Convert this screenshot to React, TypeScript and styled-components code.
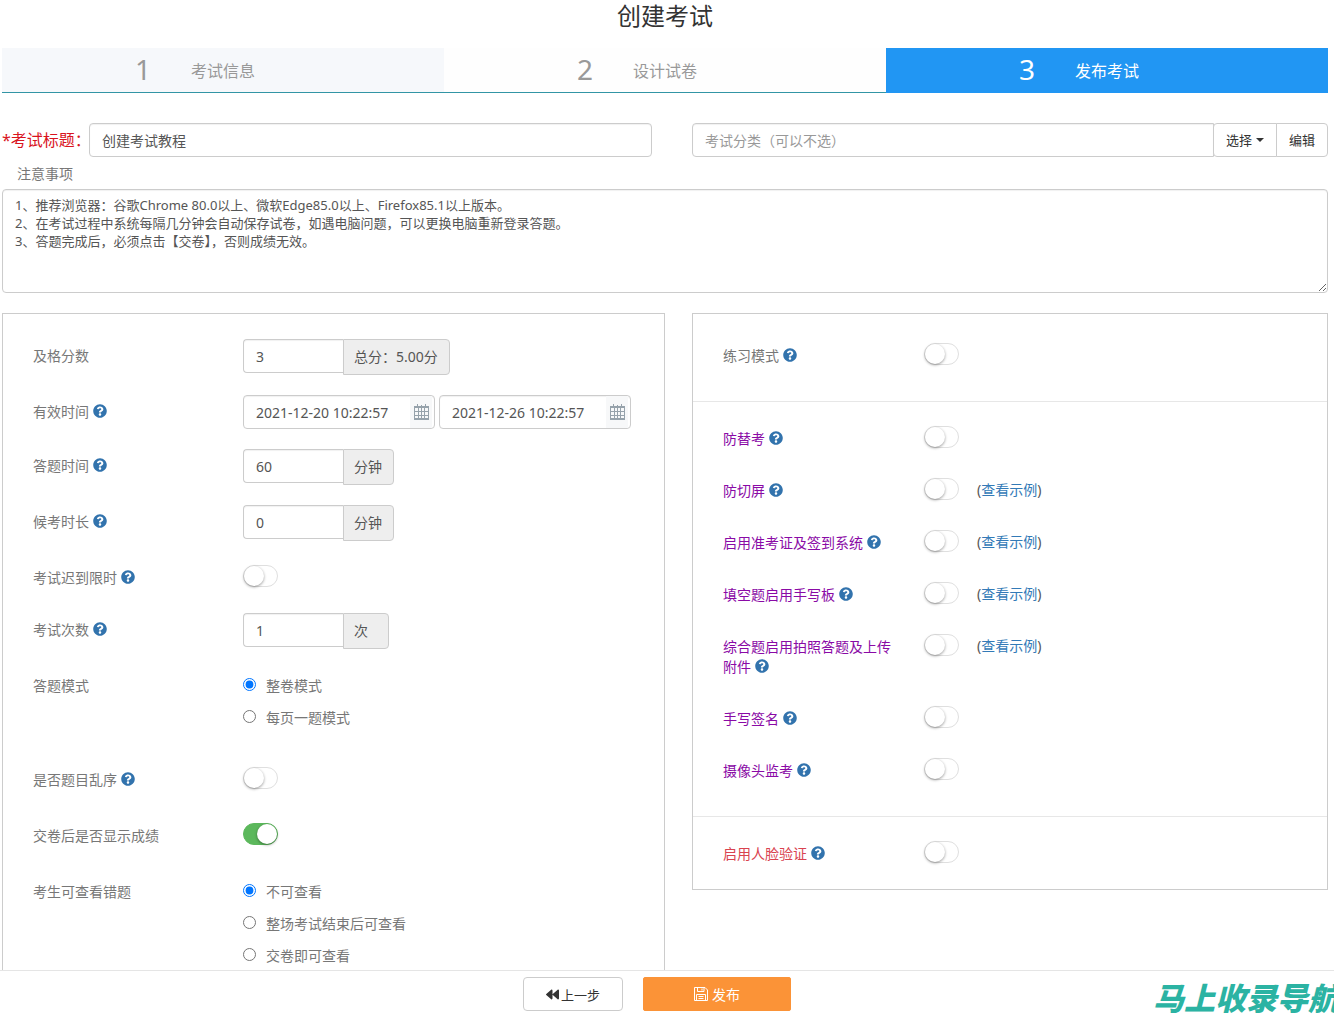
import React from "react";
import styled, { createGlobalStyle } from "styled-components";
import { FaQuestionCircle, FaBackward } from "react-icons/fa";

const GlobalStyle = createGlobalStyle`
  *, *::before, *::after { box-sizing: border-box; }
  body {
    margin: 0;
    background: #fff;
    color: #555;
    font: 14px/20px "Noto Sans", "Noto Sans CJK SC", sans-serif;
  }
  input, textarea, button { font-family: inherit; color: inherit; margin: 0; }
`;

const Page = styled.div`
  display: flex;
  flex-direction: column;
  height: 100vh;
  overflow: hidden;
`;

const Main = styled.main`
  flex: 1;
  min-height: 0;
  overflow-y: auto;
  scrollbar-width: none;
  padding: 0 6px 20px 2px;
`;

const PageTitle = styled.h1`
  margin: 0 0 16px;
  color: #333;
  font-size: 24px;
  font-weight: 400;
  line-height: 32px;
  text-align: center;
`;

const Steps = styled.ol`
  display: grid;
  grid-template-columns: repeat(3, 1fr);
  margin: 0 0 30px;
  padding: 0;
  list-style: none;
`;

type StepState = "done" | "idle" | "active";
const stepBackground = { done: "#f6f8fb", idle: "#fefefe", active: "#2196f3" };

const Step = styled.li<{ $state: StepState }>`
  display: grid;
  grid-template-columns: 1fr auto 1fr;
  align-items: center;
  height: 45px;
  border-bottom: 1px solid ${(p) => (p.$state === "active" ? "#2196f3" : "#3295a5")};
  background: ${(p) => stepBackground[p.$state]};
  color: ${(p) => (p.$state === "active" ? "#fff" : "#999")};
  font-size: 16px;
`;

const StepNumber = styled.span`
  justify-self: end;
  padding: 0 40px 2px 0;
  font-size: 28px;
  line-height: 42px;
`;

const StepLabel = styled.span`
  padding-top: 2px;
`;

const Halves = styled.div`
  display: grid;
  grid-template-columns: repeat(2, minmax(0, 1fr));
  align-items: start;
`;

const TitleField = styled.div`
  display: flex;
  align-items: center;
  padding-right: 13px;
`;

const RequiredLabel = styled.label`
  flex: 0 0 87px;
  min-width: 0;
  color: #d9141e;
  font-size: 16px;
  white-space: nowrap;
`;

const TextInput = styled.input<{ $joined?: boolean }>`
  flex: 1;
  min-width: 0;
  height: 34px;
  padding: 6px 12px;
  border: 1px solid #ccc;
  border-radius: ${(p) => (p.$joined ? "4px 0 0 4px" : "4px")};
  background: #fff;
  box-shadow: inset 0 1px 1px rgba(0, 0, 0, 0.06);
  font-size: 14px;
  &::placeholder { color: #999; opacity: 1; }
`;

const CategoryField = styled.div`
  display: flex;
  margin-left: 27px;
`;

const GroupButton = styled.button`
  display: flex;
  align-items: center;
  justify-content: center;
  gap: 4px;
  height: 34px;
  margin-left: -1px;
  padding: 0 12px 2px;
  border: 1px solid #ccc;
  border-radius: 4px 0 0 4px;
  background: #fff;
  color: #333;
  font-size: 13px;
  &:last-child { border-radius: 0 4px 4px 0; }
`;

const Caret = styled.span`
  margin-top: 2px;
  border: 4px solid transparent;
  border-top-color: #333;
  border-bottom: 0;
`;

const NotesLabel = styled.label`
  display: block;
  padding: 7px 15px 5px;
  color: #777;
`;

const Notes = styled.textarea`
  display: block;
  width: 100%;
  height: 104px;
  margin-bottom: 20px;
  padding: 6px 12px;
  border: 1px solid #ccc;
  border-radius: 4px;
  box-shadow: inset 0 1px 1px rgba(0, 0, 0, 0.06);
  font-size: 13px;
  line-height: 18px;
  resize: vertical;
`;

const Panel = styled.section<{ $side: "left" | "right" }>`
  margin-left: ${(p) => (p.$side === "right" ? "27px" : "0")};
  padding-top: 5px;
  border: 1px solid #ccc;
`;

const Section = styled.div`
  display: grid;
  gap: 20px;
  padding: 20px 30px 30px;
  & + & { border-top: 1px solid #e7e7e7; }
  &:last-child { padding-bottom: 20px; }
`;

const Row = styled.div<{ $height: number; $labelWidth: number }>`
  display: grid;
  grid-template-columns: ${(p) => p.$labelWidth}px minmax(0, 1fr);
  min-height: ${(p) => p.$height}px;
  align-items: start;
`;

const tones = { plain: "#777", pro: "#8a0aa6", alert: "#d9434f" };
type Tone = keyof typeof tones;

const RowLabel = styled.div<{ $tone: Tone }>`
  padding: 7px 30px 5px 0;
  color: ${(p) => tones[p.$tone]};
`;

const HelpIcon = styled(FaQuestionCircle)`
  width: 14px;
  height: 14px;
  margin-left: 4px;
  color: #3273ad;
  vertical-align: -1px;
`;

const Controls = styled.div`
  display: flex;
  align-items: flex-start;
  gap: 4px;
`;

const Amount = styled.div`
  display: flex;
  align-items: flex-start;
`;

const AmountInput = styled(TextInput)`
  flex: 0 0 100px;
  border-right: 0;
`;

const Unit = styled.span<{ $width: number }>`
  min-width: ${(p) => p.$width}px;
  padding: 7px 10px;
  border: 1px solid #ccc;
  border-radius: 0 4px 4px 0;
  background: #eee;
`;

const DateBox = styled.div`
  display: flex;
  flex: 0 1 192px;
  min-width: 0;
  height: 34px;
  padding-right: 2px;
  border: 1px solid #ccc;
  border-radius: 4px;
  box-shadow: inset 0 1px 1px rgba(0, 0, 0, 0.06);
`;

const DateInput = styled.input`
  flex: 1;
  min-width: 0;
  padding: 0 0 0 12px;
  border: 0;
  background: none;
  font-size: 14px;
`;

const DateButton = styled.button`
  display: flex;
  flex: none;
  align-items: center;
  justify-content: center;
  width: 22px;
  padding: 0;
  border: 0;
  background: #f7f8f9;
  color: #96a2ab;
`;

const Switch = styled.input`
  appearance: none;
  width: 35px;
  height: 22px;
  && { margin: 4px 14px 0 0; }
  border: 1px solid #dfdfdf;
  border-radius: 11px;
  background: #fff;
  &::before {
    content: "";
    display: block;
    width: 20px;
    height: 20px;
    border-radius: 50%;
    background: #fff;
    box-shadow: 0 1px 3px rgba(0, 0, 0, 0.4);
  }
  &:checked { border-color: #5cb85c; background: #5cb85c; }
  &:checked::before { margin-left: 13px; }
`;

const Example = styled.span`
  padding-top: 6px;
  a { color: #337ab7; text-decoration: none; }
`;

const Options = styled.div`
  display: grid;
`;

const Option = styled.label`
  display: flex;
  align-items: center;
  gap: 10px;
  padding: 7px 0 5px;
  color: #777;
  input { width: 13px; height: 13px; margin-bottom: 3px; }
`;

const Footer = styled.footer`
  position: relative;
  display: flex;
  align-items: center;
  justify-content: center;
  gap: 20px;
  height: 50px;
  padding: 0 20px 3px 0;
  overflow: hidden;
  border-top: 1px solid #e5e5e5;
  background: #fff;
`;

const FooterButton = styled.button<{ $primary?: boolean }>`
  display: flex;
  align-items: center;
  justify-content: center;
  gap: ${(p) => (p.$primary ? "4px" : "2px")};
  width: ${(p) => (p.$primary ? "148px" : "100px")};
  height: 34px;
  padding: 0;
  border: 1px solid ${(p) => (p.$primary ? "#fb9337" : "#ccc")};
  border-radius: ${(p) => (p.$primary ? "2px" : "4px")};
  background: ${(p) => (p.$primary ? "#fb9337" : "#fff")};
  color: ${(p) => (p.$primary ? "#fff" : "#333")};
  font-size: ${(p) => (p.$primary ? "14px" : "13px")};
`;

const SiteMark = styled.span`
  position: absolute;
  right: -5px;
  bottom: 2px;
  color: #2bb3a3;
  font-size: 31px;
  font-style: italic;
  font-weight: 900;
  line-height: 40px;
  white-space: nowrap;
`;

const CalendarIcon = () => (
  <svg width="15" height="16" viewBox="0 0 15 16" aria-hidden="true">
    <path
      fill="currentColor"
      fillRule="evenodd"
      d="M3 0h1v2h3V1h1v1h3V0h1v2h3v14H0V2h3zM1 4v3h3V4zM5 4v3h2V4zM8 4v3h2V4zM11 4v3h3V4zM1 8v3h3V8zM5 8v3h2V8zM8 8v3h2V8zM11 8v3h3V8zM1 12v2h3v-2zM5 12v2h2v-2zM8 12v2h2v-2zM11 12v2h3v-2z"
    />
  </svg>
);

const SaveIcon = () => (
  <svg width="14" height="14" viewBox="0 0 14 14" fill="none" stroke="currentColor" aria-hidden="true">
    <path d="M.5.5h10.500l2.500 2.500v10.500H.5zM3.500.5v4h6.500v-4M8 1.500v2M2.500 13.500v-6h9v6M4.500 9.500h5M4.500 11.500h5" />
  </svg>
);

type FieldProps = {
  label: string;
  id?: string;
  help?: boolean;
  tone?: Tone;
  height?: number;
  labelWidth?: number;
  children: React.ReactNode;
};

const Field = ({ label, id, help, tone = "plain", height = 36, labelWidth = 210, children }: FieldProps) => (
  <Row $height={height} $labelWidth={labelWidth}>
    <RowLabel $tone={tone}>
      {id ? <label htmlFor={id}>{label}</label> : label}
      {help && <HelpIcon aria-hidden="true" />}
    </RowLabel>
    <Controls>{children}</Controls>
  </Row>
);

const AmountField = ({ id, value, unit, width }: { id: string; value: string; unit: string; width: number }) => (
  <Amount>
    <AmountInput id={id} defaultValue={value} $joined />
    <Unit $width={width}>{unit}</Unit>
  </Amount>
);

const DateField = ({ id, value, name }: { id: string; value: string; name: string }) => (
  <DateBox>
    <DateInput id={id} defaultValue={value} aria-label={name} />
    <DateButton type="button" aria-label={`选择${name}`}>
      <CalendarIcon />
    </DateButton>
  </DateBox>
);

const RadioField = ({ name, label, options }: { name: string; label: string; options: string[] }) => (
  <Options role="radiogroup" aria-label={label}>
    {options.map((text, i) => (
      <Option key={text}>
        <input type="radio" name={name} defaultChecked={i === 0} />
        {text}
      </Option>
    ))}
  </Options>
);

type ToggleProps = { id: string; label: string; tone?: Tone; example?: boolean };

const ToggleField = ({ id, label, tone, example }: ToggleProps) => (
  <Field id={id} label={label} tone={tone} help height={32} labelWidth={201}>
    <Switch id={id} type="checkbox" />
    {example && (
      <Example>
        (<a href="#example">查看示例</a>)
      </Example>
    )}
  </Field>
);

const guards: ToggleProps[] = [
  { id: "substitute", label: "防替考" },
  { id: "screen", label: "防切屏", example: true },
  { id: "ticket", label: "启用准考证及签到系统", example: true },
  { id: "tablet", label: "填空题启用手写板", example: true },
  { id: "photo", label: "综合题启用拍照答题及上传附件", example: true },
  { id: "signature", label: "手写签名" },
  { id: "camera", label: "摄像头监考" },
];

const steps: { label: string; state: StepState }[] = [
  { label: "考试信息", state: "done" },
  { label: "设计试卷", state: "idle" },
  { label: "发布考试", state: "active" },
];

const notes = [
  "1、推荐浏览器：谷歌Chrome 80.0以上、微软Edge85.0以上、Firefox85.1以上版本。",
  "2、在考试过程中系统每隔几分钟会自动保存试卷，如遇电脑问题，可以更换电脑重新登录答题。",
  "3、答题完成后，必须点击【交卷】，否则成绩无效。",
].join("\n");

export default function App() {
  return (
    <Page lang="zh-CN">
      <GlobalStyle />
      <Main>
        <PageTitle>创建考试</PageTitle>
        <Steps>
          {steps.map((step, i) => (
            <Step key={step.label} $state={step.state}>
              <StepNumber>{i + 1}</StepNumber>
              <StepLabel>{step.label}</StepLabel>
            </Step>
          ))}
        </Steps>

        <Halves>
          <TitleField>
            <RequiredLabel htmlFor="title">*考试标题：</RequiredLabel>
            <TextInput id="title" defaultValue="创建考试教程" />
          </TitleField>
          <CategoryField>
            <TextInput $joined aria-label="考试分类" placeholder="考试分类（可以不选）" />
            <GroupButton type="button">
              选择
              <Caret />
            </GroupButton>
            <GroupButton type="button">编辑</GroupButton>
          </CategoryField>
        </Halves>

        <NotesLabel htmlFor="notes">注意事项</NotesLabel>
        <Notes id="notes" defaultValue={notes} />

        <Halves>
          <Panel $side="left">
            <Section>
              <Field id="pass" label="及格分数">
                <AmountField id="pass" value="3" unit="总分：5.00分" width={107} />
              </Field>
              <Field id="start" label="有效时间" help height={34}>
                <DateField id="start" name="开始时间" value="2021-12-20 10:22:57" />
                <DateField id="end" name="结束时间" value="2021-12-26 10:22:57" />
              </Field>
              <Field id="duration" label="答题时间" help>
                <AmountField id="duration" value="60" unit="分钟" width={51} />
              </Field>
              <Field id="waiting" label="候考时长" help>
                <AmountField id="waiting" value="0" unit="分钟" width={51} />
              </Field>
              <Field id="late" label="考试迟到限时" help height={32}>
                <Switch id="late" type="checkbox" />
              </Field>
              <Field id="attempts" label="考试次数" help>
                <AmountField id="attempts" value="1" unit="次" width={46} />
              </Field>
              <Field label="答题模式" height={74}>
                <RadioField name="mode" label="答题模式" options={["整卷模式", "每页一题模式"]} />
              </Field>
              <Field id="shuffle" label="是否题目乱序" help>
                <Switch id="shuffle" type="checkbox" />
              </Field>
              <Field id="score" label="交卷后是否显示成绩">
                <Switch id="score" type="checkbox" defaultChecked />
              </Field>
              <Field label="考生可查看错题" height={106}>
                <RadioField
                  name="review"
                  label="考生可查看错题"
                  options={["不可查看", "整场考试结束后可查看", "交卷即可查看"]}
                />
              </Field>
            </Section>
          </Panel>

          <Panel $side="right">
            <Section>
              <ToggleField id="practice" label="练习模式" />
            </Section>
            <Section>
              {guards.map((guard) => (
                <ToggleField key={guard.id} tone="pro" {...guard} />
              ))}
            </Section>
            <Section>
              <ToggleField id="face" label="启用人脸验证" tone="alert" />
            </Section>
          </Panel>
        </Halves>
      </Main>

      <Footer>
        <FooterButton type="button">
          <FaBackward size={13} aria-hidden="true" />
          上一步
        </FooterButton>
        <FooterButton type="button" $primary>
          <SaveIcon />
          发布
        </FooterButton>
        <SiteMark>马上收录导航</SiteMark>
      </Footer>
    </Page>
  );
}
